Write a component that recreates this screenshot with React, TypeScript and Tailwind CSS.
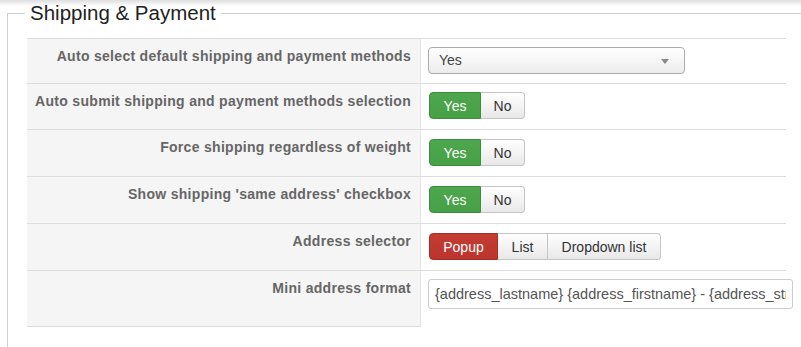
import React from "react";

const font = { fontFamily: '"Liberation Sans", Arial, sans-serif' };

function Label({ children, last }: { children: React.ReactNode; last?: boolean }) {
  return (
    <div
      className={`w-[394px] shrink-0 bg-[#f5f5f5] border-r border-[#e4e4e4] pr-[9px] pt-[8px] text-right text-[14px] tracking-[0.3px] leading-[18px] font-bold text-[#666] ${last ? "border-b border-b-[#ddd]" : ""}`}
    >
      {children}
    </div>
  );
}

function YesNo() {
  return (
    <div className="flex ml-[1px]">
      <button className="w-[52px] h-[27px] rounded-l-[4px] border border-[#3d8b3d] bg-[linear-gradient(#4ea74e,#46a046)] text-white text-[14px] leading-[20px]">
        Yes
      </button>
      <button className="w-[44px] h-[27px] rounded-r-[4px] border border-l-0 border-[#c5c5c5] bg-[linear-gradient(#ffffff,#e8e8e8)] text-[#333] text-[14px] leading-[20px]">
        No
      </button>
    </div>
  );
}

export default function App() {
  return (
    <div
      className="w-[801px] h-[347px] overflow-hidden bg-[linear-gradient(#dedede,#ffffff_6px)] pt-[1px]"
      style={font}
    >
      <fieldset className="ml-[7px] w-[820px] border border-[#cfcfcf] pl-[19px] pt-[13px] pb-[40px]">
        <legend className="ml-[-2px] px-[5px] text-[20.5px] leading-[24px] text-[#222]">
          Shipping &amp; Payment
        </legend>
        <div className="w-[759px] flex flex-col">
          <div className="flex h-[45px] border-t border-[#ddd]">
            <Label>Auto select default shipping and payment methods</Label>
            <div className="pl-[7px] pt-[8px]">
              <div className="relative w-[257px] h-[27px] rounded-[4px] border border-[#aaa] bg-[linear-gradient(#ffffff,#ececec)] pl-[10px] text-[14px] leading-[25px] text-[#444]">
                Yes
                <svg className="absolute right-[15px] top-[11px]" width="8" height="5" viewBox="0 0 8 5">
                  <path d="M0 0 L8 0 L4 5 Z" fill="#888" />
                </svg>
              </div>
            </div>
          </div>
          <div className="flex h-[46px] border-t border-[#ddd]">
            <Label>Auto submit shipping and payment methods selection</Label>
            <div className="pl-[7px] pt-[8px]">
              <YesNo />
            </div>
          </div>
          <div className="flex h-[47px] border-t border-[#ddd]">
            <Label>Force shipping regardless of weight</Label>
            <div className="pl-[7px] pt-[9px]">
              <YesNo />
            </div>
          </div>
          <div className="flex h-[47px] border-t border-[#ddd]">
            <Label>Show shipping 'same address' checkbox</Label>
            <div className="pl-[7px] pt-[9px]">
              <YesNo />
            </div>
          </div>
          <div className="flex h-[47px] border-t border-[#ddd]">
            <Label>Address selector</Label>
            <div className="pl-[7px] pt-[9px]">
              <div className="flex ml-[1px]">
                <button className="w-[69px] h-[27px] rounded-l-[4px] border border-[#a52e27] bg-[linear-gradient(#c43c33,#bb352d)] text-white text-[14px] leading-[20px]">
                  Popup
                </button>
                <button className="w-[50px] h-[27px] border border-l-0 border-[#c5c5c5] bg-[linear-gradient(#ffffff,#e8e8e8)] text-[#333] text-[14px] leading-[20px]">
                  List
                </button>
                <button className="w-[113px] h-[27px] rounded-r-[4px] border border-l-0 border-[#c5c5c5] bg-[linear-gradient(#ffffff,#e8e8e8)] text-[#333] text-[14px] leading-[20px]">
                  Dropdown list
                </button>
              </div>
            </div>
          </div>
          <div className="flex h-[57px] border-t border-[#ddd]">
            <Label last>Mini address format</Label>
            <div className="pl-[7px] pt-[8px]">
              <input
                readOnly
                value="{address_lastname} {address_firstname} - {address_street}, {address_city}"
                className="w-[365px] h-[30px] rounded-[3px] border border-[#ccc] bg-white pl-[6px] pr-[6px] text-[14.5px] text-[#555] outline-none"
                style={font}
              />
            </div>
          </div>
        </div>
      </fieldset>
    </div>
  );
}
